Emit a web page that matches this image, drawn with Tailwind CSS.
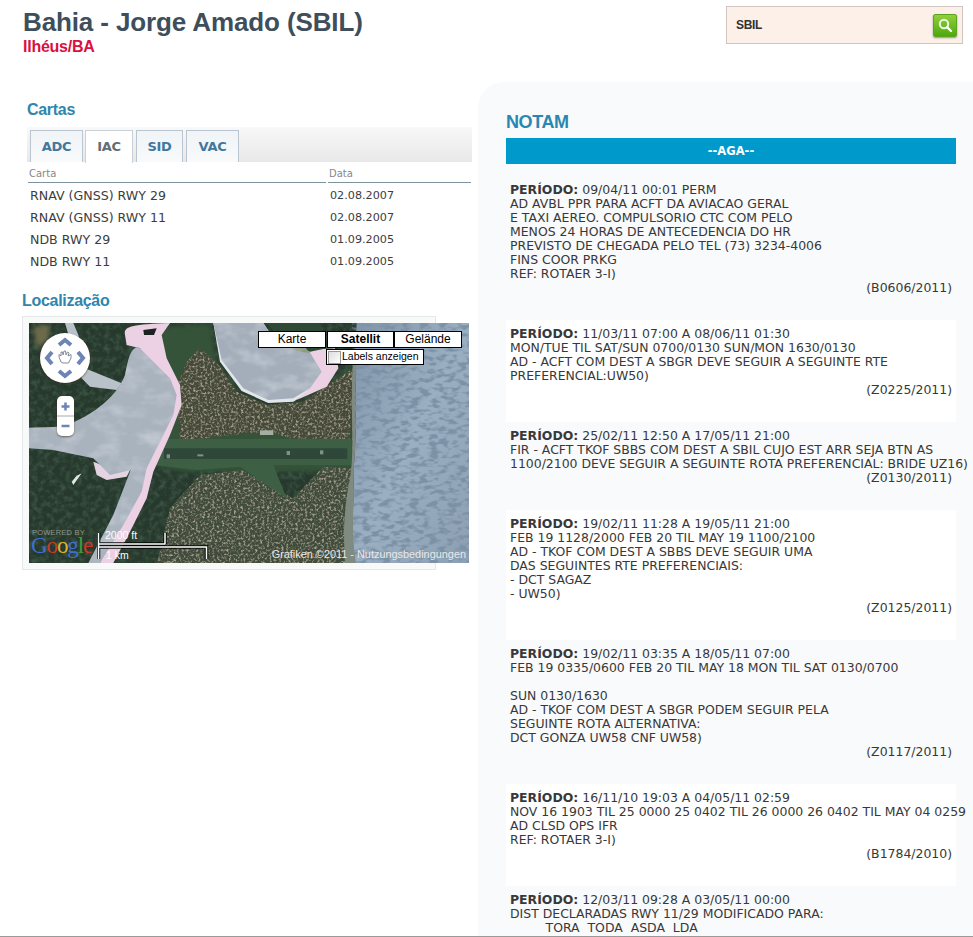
<!doctype html>
<html lang="pt">
<head>
<meta charset="utf-8">
<title>SBIL</title>
<script src="https://cdn.jsdelivr.net/npm/@tailwindcss/browser@4"></script>
</head>
<body class="bg-white font-['Liberation_Sans',Arial,sans-serif]">
<div class="relative w-[973px] h-[937px] overflow-hidden">
  <header class="flex justify-between h-[82px]">
    <div class="pl-[23px] pt-[6px]">
      <h1 class="text-[26px] leading-[32px] font-bold text-[#3e4e5b] tracking-[-0.12px]">Bahia - Jorge Amado (SBIL)</h1>
      <p class="text-[16px] leading-[18px] font-bold text-[#d9113f] tracking-[-0.25px]">Ilhéus/BA</p>
    </div>
    <div class="mt-[6px] mr-[10px] w-[237px] h-[38px] bg-[#fdf0e9] border border-[#cfc6c2] flex items-center justify-between pl-[9px] pr-[5px]">
      <span class="text-[12px] font-bold text-[#33302e] tracking-[-0.3px]">SBIL</span>
      <span class="w-[24px] h-[23px] rounded-[2px] bg-gradient-to-b from-[#8fd03a] to-[#4da80c] border border-[#5da51c] shadow-[0_1px_2px_rgba(0,0,0,.4)] flex items-center justify-center">
        <svg width="16" height="16" viewBox="0 0 16 16" fill="none"><circle cx="7" cy="7" r="4.2" stroke="#eef8e0" stroke-width="2"/><path d="M10.2 10.2 14 14" stroke="#fff" stroke-width="2.4" stroke-linecap="round"/></svg>
      </span>
    </div>
  </header>
  <main class="flex items-start">
    <section class="w-[478px] shrink-0">
      <h2 class="ml-[27px] mt-[18px] text-[16px] leading-[20px] font-bold text-[#2f86ad] tracking-[-0.3px]">Cartas</h2>
      <div class="ml-[27px] mt-[7px] w-[445px] h-[35px] bg-gradient-to-b from-[#f8f8f8] to-[#e8e8e8] flex items-end gap-[2px] pl-[3px] font-['DejaVu_Sans',sans-serif] text-[13px] tracking-[-0.3px] font-bold text-[#43779c]">
        <div class="w-[53px] h-[32px] flex items-center justify-center border border-b-0 border-[#b9c6d2] bg-gradient-to-b from-[#f0f4f7] to-[#f8fafb]">ADC</div>
        <div class="w-[48px] h-[33px] -mb-[1px] pb-[1px] flex items-center justify-center border border-b-0 border-[#c9d1d8] bg-white text-[#626d76]">IAC</div>
        <div class="w-[47px] h-[32px] ml-[1px] flex items-center justify-center border border-b-0 border-[#b9c6d2] bg-gradient-to-b from-[#f0f4f7] to-[#f8fafb]">SID</div>
        <div class="w-[53px] h-[32px] ml-[1px] flex items-center justify-center border border-b-0 border-[#b9c6d2] bg-gradient-to-b from-[#f0f4f7] to-[#f8fafb]">VAC</div>
      </div>
      <div class="ml-[28px] w-[443px] font-['DejaVu_Sans',sans-serif] text-[#3d3d3d]">
        <div class="flex gap-[2px] text-[10px] text-[#888] h-[21px] leading-[24px] mb-[2px]">
          <div class="w-[298px] pl-[1px] border-b border-[#7f929f]">Carta</div>
          <div class="flex-1 pl-[1px] border-b border-[#7f929f]">Data</div>
        </div>
        <div class="flex text-[12.6px] h-[22px] items-center"><div class="w-[302px] pl-[2px]">RNAV (GNSS) RWY 29</div><div class="text-[11.2px]">02.08.2007</div></div>
        <div class="flex text-[12.6px] h-[22px] items-center"><div class="w-[302px] pl-[2px]">RNAV (GNSS) RWY 11</div><div class="text-[11.2px]">02.08.2007</div></div>
        <div class="flex text-[12.6px] h-[22px] items-center"><div class="w-[302px] pl-[2px]">NDB RWY 29</div><div class="text-[11.2px]">01.09.2005</div></div>
        <div class="flex text-[12.6px] h-[22px] items-center"><div class="w-[302px] pl-[2px]">NDB RWY 11</div><div class="text-[11.2px]">01.09.2005</div></div>
      </div>
      <h2 class="ml-[22px] mt-[18px] text-[16px] leading-[20px] font-bold text-[#2f86ad] tracking-[-0.3px]">Localização</h2>
      <div class="relative ml-[22px] mt-[5px] w-[414px] h-[254px] bg-[#f8f9f9] border border-[#e4e8e8]">
        <div class="absolute left-[6px] top-[6px] w-[440px] h-[240px] overflow-hidden">
          <svg width="440" height="240" viewBox="57 114 1320 720" class="block">
            <defs>
              <filter id="n1" x="0" y="0" width="100%" height="100%"><feTurbulence type="fractalNoise" baseFrequency="0.14" numOctaves="2" seed="4"/><feColorMatrix values="0 0 0 0 .42  0 0 0 0 .38  0 0 0 0 .3  3 0 0 0 -1.4"/></filter>
              <filter id="n2" x="0" y="0" width="100%" height="100%"><feTurbulence type="fractalNoise" baseFrequency="0.035 0.075" numOctaves="2" seed="9"/><feColorMatrix values="0 0 0 0 .2  0 0 0 0 .28  0 0 0 0 .38  4.5 0 0 0 -2.05"/></filter>
              <filter id="n3" x="0" y="0" width="100%" height="100%"><feTurbulence type="fractalNoise" baseFrequency="0.06" numOctaves="3" seed="2"/><feColorMatrix values="0 0 0 0 .06  0 0 0 0 .12  0 0 0 0 .08  1.6 0 0 0 -.65"/></filter>
              <filter id="n4" x="0" y="0" width="100%" height="100%"><feTurbulence type="fractalNoise" baseFrequency="0.015 0.025" numOctaves="3" seed="12"/><feColorMatrix values="0 0 0 0 .6  0 0 0 0 .64  0 0 0 0 .7  1.6 0 0 0 -.72"/></filter>
              <filter id="b1"><feGaussianBlur stdDeviation="7"/></filter>
              <filter id="b2"><feGaussianBlur stdDeviation="2"/></filter>
              <linearGradient id="sea" x1="0" y1="0" x2="1" y2="1"><stop offset="0" stop-color="#8195a9"/><stop offset=".5" stop-color="#9bafc2"/><stop offset="1" stop-color="#8da0b3"/></linearGradient>
              <clipPath id="town"><path d="M440 834 480 670 570 570 700 555 790 610 850 640 940 545 1025 550 1010 834ZM500 300 530 230 570 190 620 230 680 320 770 360 880 350 1030 250 1020 462 840 460 780 440 660 450 510 470Z"/></clipPath>
              <clipPath id="water"><path d="M57 428 150 425C230 405 320 340 345 270 355 220 360 190 385 185L430 230 480 280 500 330 490 390 450 470 410 550 395 620 340 720 270 834H235L310 690 362 555 300 570 250 520 130 495 57 490ZM610 114H760L790 160 860 190 895 195 935 260 900 310 850 340 775 345 700 310 635 225Z"/></clipPath>
            </defs>
            <rect x="57" y="114" width="1320" height="720" fill="#26392c"/>
            <rect x="57" y="114" width="1320" height="720" filter="url(#n3)"/>
            <path d="M70 125 120 120 115 165 80 190Z" fill="#6d6a4c" filter="url(#b1)"/>
            <path d="M420 130 600 114 620 230 690 330 780 370 880 350 1030 240 1030 560 520 560 430 540Z" fill="#355238" filter="url(#b1)"/>
            <g filter="url(#b2)">
              <path d="M440 834 480 670 570 570 700 555 790 610 850 640 940 545 1025 550 1010 834Z" fill="#3f4c3b"/>
              <path d="M500 300 530 230 570 190 620 230 680 320 770 360 880 350 1030 250 1020 462 840 460 780 440 660 450 510 470Z" fill="#454a37"/>
            </g>
            <g clip-path="url(#town)"><rect x="400" y="114" width="700" height="720" filter="url(#n1)"/></g>
            <path d="M470 462H1025V540H790L830 640 770 600 690 545 560 555 430 540Z" fill="#3c6045" filter="url(#b2)"/>
            <rect x="462" y="490" width="550" height="32" fill="#2e4739" filter="url(#b2)"/>
            <g fill="#7f9088"><rect x="470" y="508" width="10" height="12"/><rect x="562" y="508" width="18" height="6"/><rect x="830" y="498" width="10" height="12"/><rect x="930" y="496" width="10" height="12"/><rect x="750" y="436" width="40" height="14" fill="#a3afa3"/></g>
            <path d="M1040 114H1377V834H1035C1020 730 1035 640 1030 560 1045 430 1030 280 1040 114Z" fill="url(#sea)"/>
            <path d="M1040 114H1377V834H1035C1020 730 1035 640 1030 560 1045 430 1030 280 1040 114Z" filter="url(#n2)"/>
            <path d="M1028 240C1020 400 1036 500 1018 590 1000 680 1000 760 1005 834H1038C1020 730 1035 640 1030 560 1045 430 1030 280 1040 240Z" fill="#7f8a80" filter="url(#b2)"/>
            <g filter="url(#b2)">
              <path d="M345 150C340 125 360 118 480 114L455 150 470 220 510 300 515 360 480 450 430 560 410 640 360 740 310 834H270L330 700 400 560 430 400 440 280 390 190 350 180Z" fill="#ecd0e4"/>
              <path d="M250 530 300 550 360 555 350 575 290 585 260 570Z" fill="#e4d3e0"/>
              <path d="M165 114H190L205 150 225 250 335 295 320 315 240 305 215 280 190 200Z" fill="#b9c1c9"/>
              <path d="M57 428 150 425C230 405 320 340 345 270 355 220 360 190 385 185L430 230 480 280 500 330 490 390 450 470 410 550 395 620 340 720 270 834H235L310 690 362 555 300 570 250 520 130 495 57 490Z" fill="#a9b3be"/>
              <path d="M610 114H760L790 160 860 190 895 195 940 260 905 315 850 350 775 354 695 318 630 230Z" fill="#e2e6ea"/>
              <path d="M860 345 950 305 985 250 975 190 895 195 935 260 900 310Z" fill="#ecd0e4"/>
              <path d="M610 114H760L790 160 860 190 895 195 935 260 900 310 850 340 775 345 700 310 635 225Z" fill="#a3aeba"/>
              <path d="M770 114H930L950 190 900 200 860 180 800 150Z" fill="#2f4a35"/>
              <path d="M830 165 880 180 900 205 850 195Z" fill="#8f9a82"/>
              <path d="M400 135 440 130 432 150 402 150Z" fill="#1c2422"/>
              <path d="M190 600 215 565 200 572 185 590Z" fill="#dfe6e8"/>
            </g>
            <g clip-path="url(#water)"><rect x="57" y="114" width="1000" height="720" filter="url(#n4)"/></g>
          </svg>
          <div class="absolute left-[11px] top-[10px] w-[50px] h-[50px] rounded-full bg-white shadow-[0_1px_2px_rgba(60,40,20,.6)]">
            <svg width="50" height="50" viewBox="0 0 50 50" fill="none" stroke-linejoin="miter">
              <path d="M19 12 25 7 31 12M19 38 25 43 31 38M12 19 7 25 12 31M38 19 43 25 38 31" stroke="#6d84b4" stroke-width="4"/>
              <path d="M21 29 19 24V21.500L21 23 21 19 22.500 19 23 22 24 18 25.500 18 26 22 27.500 19 29 20 28 23 31 21.500 31 25 28.500 30H23Z" stroke="#77808c" stroke-width=".9" fill="#fff"/>
            </svg>
          </div>
          <div class="absolute left-[28px] top-[73px] w-[17px] h-[40px] rounded-[5px] bg-white shadow-[0_1px_2px_rgba(60,40,20,.6)] flex flex-col">
            <svg width="17" height="40" viewBox="0 0 17 40" fill="none"><path d="M4.500 10.500H12.500M8.500 6.500V14.500M4.500 30H12.500" stroke="#6d84b4" stroke-width="2.500"/><path d="M0 20H17" stroke="#aaa"/></svg>
          </div>
          <div class="absolute left-[229px] top-[8px] flex text-[12px] text-black leading-[15px]">
            <div class="w-[68px] h-[17px] bg-white border border-black text-center">Karte</div>
            <div class="w-[67px] h-[17px] ml-[1px] bg-white border border-black text-center font-bold">Satellit</div>
            <div class="w-[68px] h-[17px] bg-white border border-black text-center">Gelände</div>
          </div>
          <div class="absolute left-[297px] top-[26px] w-[98px] h-[16px] bg-white border border-black text-[10.500px] leading-[13px] text-black flex items-start">
            <span class="w-[13px] h-[13px] mx-[1px] mt-[1px] shrink-0 border border-[#999] bg-gradient-to-br from-[#ddd] to-[#fff]"></span>Labels anzeigen
          </div>
          <div class="absolute left-[3px] top-[205px] text-[7.500px] leading-[9px] text-[#8f988f] tracking-[0.2px]">POWERED BY</div>
          <div class="absolute left-[2px] top-[209px] text-[23px] leading-[27px] font-['Liberation_Serif',serif] tracking-[-1.1px]"><span class="text-[#3f6fd0]">G</span><span class="text-[#c63a2c]">o</span><span class="text-[#d9b52c]">o</span><span class="text-[#3f6fd0]">g</span><span class="text-[#3f9a3c]">l</span><span class="text-[#c63a2c]">e</span></div>
          <svg class="absolute left-[68px] top-[209px]" width="114" height="28" viewBox="0 0 114 28" fill="none"><path d="M1.500 1V27M1.500 12H68M68 1V12M1.500 15H109.500V27" stroke="#000" stroke-width="3.500" stroke-opacity=".9"/><path d="M1.500 1V27M1.500 12H68M68 1V12M1.500 15H109.500V27" stroke="#fff" stroke-width="1.500"/></svg>
          <div class="absolute left-[76px] top-[206px] text-[10.500px] leading-[12px] text-white">2000 ft</div>
          <div class="absolute left-[77px] top-[226px] text-[10.500px] leading-[12px] text-white">1 km</div>
          <div class="absolute right-[3px] top-[225px] text-[10.900px] leading-[13px] text-[#e8e8e8] whitespace-nowrap">Grafiken ©2011 - Nutzungsbedingungen</div>
        </div>
      </div>
    </section>
    <section class="w-[495px] shrink-0 h-[855px] rounded-tl-[26px] bg-[#f8fafb] pl-[28px]">
      <h2 class="pt-[30px] text-[18px] leading-[20px] font-bold text-[#2a87b0] tracking-[-0.4px]">NOTAM</h2>
      <div class="mt-[6px] w-[450px] h-[26px] bg-[#0099cc] text-white font-bold text-[11.500px] leading-[26px] text-center font-['DejaVu_Sans',sans-serif]">--AGA--</div>
      <div class="mt-[12px] w-[450px] font-['DejaVu_Sans',sans-serif] text-[12.450px] leading-[14px] text-[#383838]">
        <article class="pt-[7px] pb-[25px] px-[4px] whitespace-pre"><b>PERÍODO:</b> 09/04/11 00:01 PERM
AD AVBL PPR PARA ACFT DA AVIACAO GERAL
E TAXI AEREO. COMPULSORIO CTC COM PELO
MENOS 24 HORAS DE ANTECEDENCIA DO HR
PREVISTO DE CHEGADA PELO TEL (73) 3234-4006
FINS COOR PRKG
REF: ROTAER 3-I)
<div class="text-right w-[442px] h-[14px]">(B0606/2011)</div></article>
        <article class="pt-[7px] pb-[25px] px-[4px] whitespace-pre bg-white"><b>PERÍODO:</b> 11/03/11 07:00 A 08/06/11 01:30
MON/TUE TIL SAT/SUN 0700/0130 SUN/MON 1630/0130
AD - ACFT COM DEST A SBGR DEVE SEGUIR A SEGUINTE RTE
PREFERENCIAL:UW50)
<div class="text-right w-[442px] h-[14px]">(Z0225/2011)</div></article>
        <article class="pt-[7px] pb-[25px] px-[4px] whitespace-pre"><b>PERÍODO:</b> 25/02/11 12:50 A 17/05/11 21:00
FIR - ACFT TKOF SBBS COM DEST A SBIL CUJO EST ARR SEJA BTN AS
1100/2100 DEVE SEGUIR A SEGUINTE ROTA PREFERENCIAL: BRIDE UZ16)
<div class="text-right w-[442px] h-[14px]">(Z0130/2011)</div></article>
        <article class="pt-[7px] pb-[25px] px-[4px] whitespace-pre bg-white"><b>PERÍODO:</b> 19/02/11 11:28 A 19/05/11 21:00
FEB 19 1128/2000 FEB 20 TIL MAY 19 1100/2100
AD - TKOF COM DEST A SBBS DEVE SEGUIR UMA
DAS SEGUINTES RTE PREFERENCIAIS:
- DCT SAGAZ
- UW50)
<div class="text-right w-[442px] h-[14px]">(Z0125/2011)</div></article>
        <article class="pt-[7px] pb-[25px] px-[4px] whitespace-pre"><b>PERÍODO:</b> 19/02/11 03:35 A 18/05/11 07:00
FEB 19 0335/0600 FEB 20 TIL MAY 18 MON TIL SAT 0130/0700

SUN 0130/1630
AD - TKOF COM DEST A SBGR PODEM SEGUIR PELA
SEGUINTE ROTA ALTERNATIVA:
DCT GONZA UW58 CNF UW58)
<div class="text-right w-[442px] h-[14px]">(Z0117/2011)</div></article>
        <article class="pt-[7px] pb-[25px] px-[4px] whitespace-pre bg-white"><b>PERÍODO:</b> 16/11/10 19:03 A 04/05/11 02:59
NOV 16 1903 TIL 25 0000 25 0402 TIL 26 0000 26 0402 TIL MAY 04 0259
AD CLSD OPS IFR
REF: ROTAER 3-I)
<div class="text-right w-[442px] h-[14px]">(B1784/2010)</div></article>
        <article class="pt-[7px] pb-[25px] px-[4px] whitespace-pre"><b>PERÍODO:</b> 12/03/11 09:28 A 03/05/11 00:00
DIST DECLARADAS RWY 11/29 MODIFICADO PARA:
         TORA  TODA  ASDA  LDA</article>
      </div>
    </section>
  </main>
  <div class="absolute left-0 right-0 bottom-0 h-[1px] bg-[#9a9a9a]"></div>
</div>
</body>
</html>
